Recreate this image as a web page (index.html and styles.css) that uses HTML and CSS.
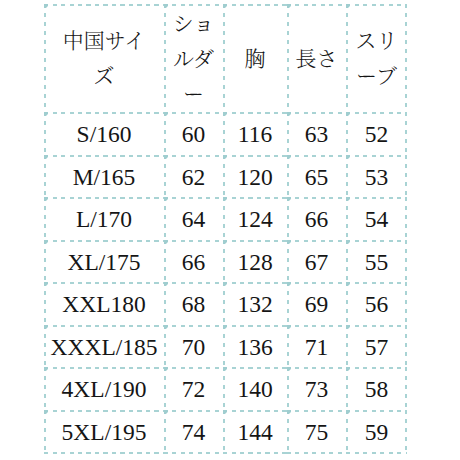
FILE: index.html
```html
<!DOCTYPE html>
<html lang="ja">
<head>
<meta charset="utf-8">
<title>サイズ表</title>
<link rel="stylesheet" href="styles.css">
</head>
<body>
<table class="size-table">
  <colgroup>
    <col class="c1"><col class="c2"><col class="c3"><col class="c4"><col class="c5">
  </colgroup>
  <thead>
    <tr class="head">
      <th>中国サイ<br>ズ</th>
      <th>ショ<br>ルダ<br>ー</th>
      <th>胸</th>
      <th>長さ</th>
      <th class="last">スリ<br>ーブ</th>
    </tr>
  </thead>
  <tbody>
    <tr><td>S/160</td><td>60</td><td>116</td><td>63</td><td class="last">52</td></tr>
    <tr><td>M/165</td><td>62</td><td>120</td><td>65</td><td class="last">53</td></tr>
    <tr><td>L/170</td><td>64</td><td>124</td><td>66</td><td class="last">54</td></tr>
    <tr><td>XL/175</td><td>66</td><td>128</td><td>67</td><td class="last">55</td></tr>
    <tr><td>XXL180</td><td>68</td><td>132</td><td>69</td><td class="last">56</td></tr>
    <tr><td>XXXL/185</td><td>70</td><td>136</td><td>71</td><td class="last">57</td></tr>
    <tr><td>4XL/190</td><td>72</td><td>140</td><td>73</td><td class="last">58</td></tr>
    <tr class="end"><td>5XL/195</td><td>74</td><td>144</td><td>75</td><td class="last">59</td></tr>
  </tbody>
</table>
</body>
</html>
```
FILE: styles.css
```css
html, body {
  margin: 0;
  padding: 0;
  background: #ffffff;
}

body {
  padding: 4px 0 0 44px;
  font-family: "Liberation Serif", "Noto Serif CJK JP", "Noto Sans CJK JP", serif;
  color: #151515;
}

.size-table {
  border-collapse: collapse;
  border-spacing: 0;
  table-layout: fixed;
  width: 363px;
}

.c1 { width: 120px; }
.c2 { width: 59px; }
.c3 { width: 64px; }
.c4 { width: 59px; }
.c5 { width: 61px; }

.size-table th,
.size-table td {
  padding: 0;
  text-align: center;
  vertical-align: middle;
  background:
    radial-gradient(circle at 1px 1px, #9fcdcf 0 2.6px, transparent 3.2px) top left / 8px 8px no-repeat,
    repeating-linear-gradient(90deg, #a8d3d4 0 4px, transparent 4px 8.5px) top left / 100% 2px no-repeat,
    repeating-linear-gradient(180deg, #a8d3d4 0 4px, transparent 4px 9px) top left / 2px 100% no-repeat;
}

.size-table th.last,
.size-table td.last {
  background:
    radial-gradient(circle at 1px 1px, #9fcdcf 0 2.6px, transparent 3.2px) top left / 8px 8px no-repeat,
    repeating-linear-gradient(90deg, #a8d3d4 0 4px, transparent 4px 8.5px) top left / 100% 2px no-repeat,
    repeating-linear-gradient(180deg, #a8d3d4 0 4px, transparent 4px 9px) top left / 2px 100% no-repeat,
    repeating-linear-gradient(180deg, #a8d3d4 0 4px, transparent 4px 9px) top right / 2px 100% no-repeat;
}

.size-table .end td {
  height: 44.5px;
  padding-bottom: 2px;
  box-sizing: border-box;
  background:
    radial-gradient(circle at 1px 1px, #9fcdcf 0 2.6px, transparent 3.2px) top left / 8px 8px no-repeat,
    repeating-linear-gradient(90deg, #a8d3d4 0 4px, transparent 4px 8.5px) top left / 100% 2px no-repeat,
    repeating-linear-gradient(90deg, #a8d3d4 0 4px, transparent 4px 8.5px) bottom left / 100% 2px no-repeat,
    repeating-linear-gradient(180deg, #a8d3d4 0 4px, transparent 4px 9px) top left / 2px 100% no-repeat;
}

.size-table .end td.last {
  background:
    radial-gradient(circle at 1px 1px, #9fcdcf 0 2.6px, transparent 3.2px) top left / 8px 8px no-repeat,
    repeating-linear-gradient(90deg, #a8d3d4 0 4px, transparent 4px 8.5px) top left / 100% 2px no-repeat,
    repeating-linear-gradient(90deg, #a8d3d4 0 4px, transparent 4px 8.5px) bottom left / 100% 2px no-repeat,
    repeating-linear-gradient(180deg, #a8d3d4 0 4px, transparent 4px 9px) top left / 2px 100% no-repeat,
    repeating-linear-gradient(180deg, #a8d3d4 0 4px, transparent 4px 9px) top right / 2px 100% no-repeat;
}

.head th {
  height: 108px;
  box-sizing: border-box;
  padding-top: 2px;
  font-weight: 300;
  font-size: 21px;
  line-height: 35px;
}

.size-table td {
  height: 42.5px;
  box-sizing: border-box;
  padding-top: 2px;
  font-size: 23.5px;
  line-height: 28px;
  white-space: nowrap;
}
```
